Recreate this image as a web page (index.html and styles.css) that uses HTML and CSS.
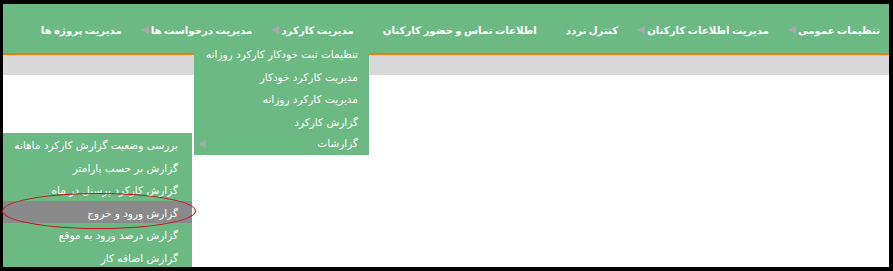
FILE: index.html
```html
<!DOCTYPE html>
<html lang="fa" dir="rtl">
<head>
<meta charset="utf-8">
<link rel="stylesheet" href="styles.css">
</head>
<body>
<div class="frame">
  <nav class="nav">
    <ul class="menu">
      <li class="item"><span class="label">تنظیمات عمومی</span><span class="arrow"></span></li>
      <li class="item"><span class="label">مدیریت اطلاعات کارکنان</span><span class="arrow"></span></li>
      <li class="item"><span class="label">کنترل تردد</span><span class="arrow hidden"></span></li>
      <li class="item"><span class="label">اطلاعات تماس و حضور کارکنان</span><span class="arrow hidden"></span></li>
      <li class="item"><span class="label">مدیریت کارکرد</span><span class="arrow"></span></li>
      <li class="item"><span class="label">مدیریت درخواست ها</span><span class="arrow"></span></li>
      <li class="item"><span class="label">مدیریت پروژه ها</span></li>
    </ul>
  </nav>
  <div class="band"></div>

  <ul class="drop drop-one">
    <li class="row">تنظیمات ثبت خودکار کارکرد روزانه</li>
    <li class="row">مدیریت کارکرد خودکار</li>
    <li class="row">مدیریت کارکرد روزانه</li>
    <li class="row">گزارش کارکرد</li>
    <li class="row has-sub"><span>گزارشات</span><span class="arrow"></span></li>
  </ul>

  <ul class="drop drop-two">
    <li class="row">بررسی وضعیت گزارش کارکرد ماهانه</li>
    <li class="row">گزارش بر حسب پارامتر</li>
    <li class="row">گزارش کارکرد پرسنل در ماه</li>
    <li class="row active">گزارش ورود و خروج</li>
    <li class="row">گزارش درصد ورود به موقع</li>
    <li class="row">گزارش اضافه کار</li>
  </ul>
</div>
<div class="mark"></div>
</body>
</html>
```
FILE: styles.css
```css
html, body {
  margin: 0;
  padding: 0;
}
body {
  background: #000;
  width: 893px;
  height: 271px;
  overflow: hidden;
  position: relative;
  font-family: "DejaVu Sans", sans-serif;
}
.frame {
  position: relative;
  margin: 4px 4px 0 3px;
  height: 263px;
  background: #fff;
  overflow: hidden;
}
.nav {
  height: 49px;
  background: #6cb984;
  border-bottom: 2px solid #f27a00;
}
.menu {
  list-style: none;
  margin: 0;
  padding: 0;
  display: flex;
  align-items: center;
  height: 100%;
}
.item {
  display: flex;
  align-items: center;
  gap: 2px;
  padding: 3px 9px 0 10px;
  color: #fff;
  font-weight: bold;
  font-size: 10.2px;
  word-spacing: -1.2px;
  white-space: nowrap;
}
.arrow {
  width: 0;
  height: 0;
  border-top: 4px solid transparent;
  border-bottom: 4px solid transparent;
  border-right: 8px solid #a8a8b0;
  flex: none;
}
.arrow.hidden {
  visibility: hidden;
}
.band {
  height: 20px;
  background: #d9d9d9;
}
.drop {
  position: absolute;
  list-style: none;
  margin: 0;
  padding: 0;
  background: #6cb984;
  color: #fff;
  font-size: 10.5px;
}
.drop-one {
  left: 191px;
  top: 38px;
  width: 175px;
}
.drop-two {
  left: 0;
  top: 129px;
  width: 189px;
}
.row {
  box-sizing: border-box;
  height: 22.6px;
  line-height: 19.6px;
  padding-top: 3px;
  padding-right: 11px;
  white-space: nowrap;
}
.drop-two .row {
  padding-right: 14px;
}
.row.has-sub {
  display: flex;
  justify-content: space-between;
  align-items: center;
  padding-left: 4px;
  padding-top: 1px;
}
.row.active {
  background: #8a8a8a;
}
.mark {
  position: absolute;
  left: 2px;
  top: 193px;
  width: 194px;
  height: 36px;
  border: 1px solid #c0141c;
  border-radius: 50%;
  box-sizing: border-box;
}
```
